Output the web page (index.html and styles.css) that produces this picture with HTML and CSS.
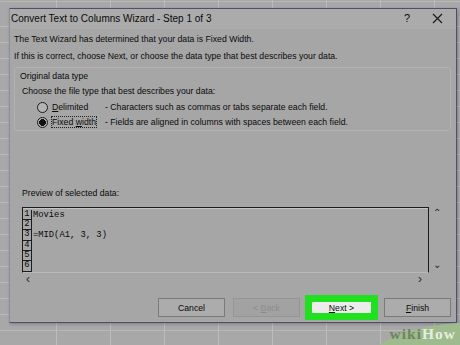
FILE: index.html
```html
<!DOCTYPE html>
<html lang="en">
<head>
  <meta charset="UTF-8">
  <title>Convert Text to Columns Wizard</title>
  <link rel="stylesheet" href="styles.css">
</head>
<body>

<div class="sheet">
  <div class="dialog">
    <!-- title bar -->
    <div class="titlebar">
      <span class="title">Convert Text to Columns Wizard - Step 1 of 3</span>
      <span class="help">?</span>
      <span class="close">
        <svg width="11" height="11" viewBox="0 0 11 11"><path d="M1 1 L10 10 M10 1 L1 10" stroke="#1a1a1a" stroke-width="1.2" fill="none"/></svg>
      </span>
    </div>

    <div class="dialog-body">
      <p class="intro">The Text Wizard has determined that your data is Fixed Width.</p>
      <p class="intro">If this is correct, choose Next, or choose the data type that best describes your data.</p>

      <div class="group">
        <div class="group-label">Original data type</div>
        <div class="choose">Choose the file type that best describes your data:</div>
        <div class="option">
          <span class="radio"></span>
          <span class="opt-name"><u>D</u>elimited</span>
          <span class="opt-desc">- Characters such as commas or tabs separate each field.</span>
        </div>
        <div class="option">
          <span class="radio checked"></span>
          <span class="opt-name"><span class="focus">Fixed <u>w</u>idth</span></span>
          <span class="opt-desc">- Fields are aligned in columns with spaces between each field.</span>
        </div>
      </div>

      <div class="preview-label">Preview of selected data:</div>
      <div class="preview-wrap">
        <div class="preview">
          <div class="row"><span class="ln">1</span><span class="cell">Movies</span></div>
          <div class="row"><span class="ln">2</span><span class="cell"></span></div>
          <div class="row"><span class="ln">3</span><span class="cell">=MID(A1, 3, 3)</span></div>
          <div class="row"><span class="ln">4</span><span class="cell"></span></div>
          <div class="row"><span class="ln">5</span><span class="cell"></span></div>
          <div class="row"><span class="ln">6</span><span class="cell"></span></div>
        </div>
        <div class="vscroll">
          <span class="arrow">&#8963;</span>
          <span class="arrow">&#8964;</span>
        </div>
      </div>
      <div class="hscroll">
        <span class="arrow">&lsaquo;</span>
        <span class="arrow">&rsaquo;</span>
      </div>

      <div class="buttons">
        <button class="btn">Cancel</button>
        <button class="btn disabled">&lt; <u>B</u>ack</button>
        <button class="btn next"><u>N</u>ext &gt;</button>
        <button class="btn"><u>F</u>inish</button>
      </div>
    </div>
  </div>

  <!-- watermark sits over the corner -->
  <div class="watermark">
    <div class="blob"></div>
    <span class="wm-text"><span class="wiki">wiki</span><span class="how">How</span></span>
  </div>
</div>

</body>
</html>
```

FILE: styles.css
```css
body {
  margin: 0;
  padding: 0;
  background-color: #a9a9a9;
  font-family: "Liberation Sans", Arial, sans-serif;
  color: #0a0a0a;
}

.sheet {
  position: relative;
  width: 460px;
  height: 345px;
  overflow: hidden;
  padding-top: 8px;
  box-sizing: border-box;
  background-color: #a8a8a8;
  background-image:
    repeating-linear-gradient(90deg, transparent 0, transparent 53px, #bcbcbc 53px, #bcbcbc 54px),
    repeating-linear-gradient(180deg, transparent 0, transparent 15px, #b9b9b9 15px, #b9b9b9 16px);
  background-position: 3px 0, 0 11px;
}

.dialog {
  margin-left: 9px;
  width: 448px;
  height: 315px;
  box-sizing: border-box;
  border: 1px solid #4e4f6e;
  border-left-color: #8a8fa8;
  background-color: #a6a6a6;
  box-shadow: 1px 1px 3px rgba(0, 0, 0, 0.25);
}

.titlebar {
  display: flex;
  align-items: center;
  height: 20px;
  background-color: #ababab;
  padding-left: 1px;
}

.title {
  flex: 1;
  font-size: 10px;
  padding-bottom: 2px;
}

.help {
  width: 30px;
  text-align: center;
  font-size: 11px;
  padding-bottom: 2px;
}

.close {
  width: 30px;
  margin-right: 4px;
  display: flex;
  justify-content: center;
  padding-bottom: 2px;
}

.dialog-body {
  padding: 4px 5px 0 4px;
  font-size: 8.7px;
}

.intro {
  margin: 0 0 4px 0;
  line-height: 13px;
  white-space: nowrap;
}

.group {
  margin-top: 3px;
  border: 1px solid #b2b2b2;
  border-radius: 3px;
  padding: 2px 5px 1px 5px;
}

.group-label {
  line-height: 12px;
}

.choose {
  line-height: 12px;
  margin: 3px 0 0 2px;
}

.option {
  display: flex;
  align-items: center;
  height: 14px;
  margin-top: 3px;
}

.option + .option {
  margin-top: 1px;
}

.radio {
  width: 9px;
  height: 9px;
  margin-left: 17px;
  margin-right: 4px;
  border: 1px solid #1c1c1c;
  border-radius: 50%;
  background-color: #b4b4b4;
  box-sizing: content-box;
}

.radio.checked {
  background: radial-gradient(circle, #111 0, #111 3.2px, #b4b4b4 3.6px);
}

.opt-name {
  width: 53px;
  line-height: 12px;
}

.focus {
  outline: 1px dotted #222;
  outline-offset: 0;
}

.preview-label {
  margin: 56px 0 0 8px;
  line-height: 12px;
}

.preview-wrap {
  display: flex;
  margin: 8px 0 0 8px;
}

.preview {
  width: 407px;
  height: 66px;
  box-sizing: border-box;
  border: 1px solid #1c1c1c;
  border-bottom-color: #b9b9b9;
  border-top-width: 1.5px;
  box-shadow: inset 0 1px 0 #c4c4c4;
  overflow: hidden;
  padding-top: 1.5px;
  font-family: "Liberation Mono", "Courier New", monospace;
  font-size: 8.8px;
}

.row {
  display: flex;
  height: 10.4px;
  line-height: 10.4px;
}

.ln {
  width: 9px;
  text-align: center;
  border-right: 1px solid #1c1c1c;
  border-bottom: 1px solid #1c1c1c;
  box-sizing: border-box;
  line-height: 9.4px;
}

.cell {
  padding-left: 1px;
}

.vscroll {
  display: flex;
  flex-direction: column;
  justify-content: space-between;
  width: 16px;
  height: 64px;
  align-items: center;
  color: #2a2a2a;
  font-size: 10px;
  line-height: 12px;
}

.hscroll {
  display: flex;
  justify-content: space-between;
  width: 396px;
  margin-left: 12px;
  height: 12px;
  line-height: 12px;
  color: #2a2a2a;
  font-size: 12px;
}

.buttons {
  display: flex;
  justify-content: flex-end;
  gap: 8px;
  margin-top: 13px;
}

.btn {
  width: 67px;
  height: 19px;
  box-sizing: border-box;
  padding: 0;
  border: 1px solid #7a7a7a;
  background-color: #acacac;
  font-family: "Liberation Sans", Arial, sans-serif;
  font-size: 8.7px;
  color: #0a0a0a;
}

.btn.disabled {
  color: #8c8c8c;
  background-color: #a2a2a2;
  border-color: #959595;
}

.btn.next {
  border: 4px solid #20e020;
  box-shadow: 0 0 0 3px #20e020;
  background-color: #ececec;
}

.btn.next + .btn {
  margin-left: 1px;
}

.watermark {
  position: absolute;
  right: 0;
  bottom: 0;
  width: 90px;
  height: 26px;
}

.blob {
  position: absolute;
  left: -8px;
  top: 3px;
  width: 236px;
  height: 96px;
  border-radius: 50%;
  background-color: #9dbb8c;
}

.wm-text {
  position: absolute;
  right: 4px;
  top: 7px;
  font-family: "Liberation Serif", "Times New Roman", serif;
  font-weight: bold;
  font-size: 15.5px;
  line-height: 16px;
  letter-spacing: 1px;
}

.wiki { color: #70855f; }
.how { color: #e6ede0; }
```
